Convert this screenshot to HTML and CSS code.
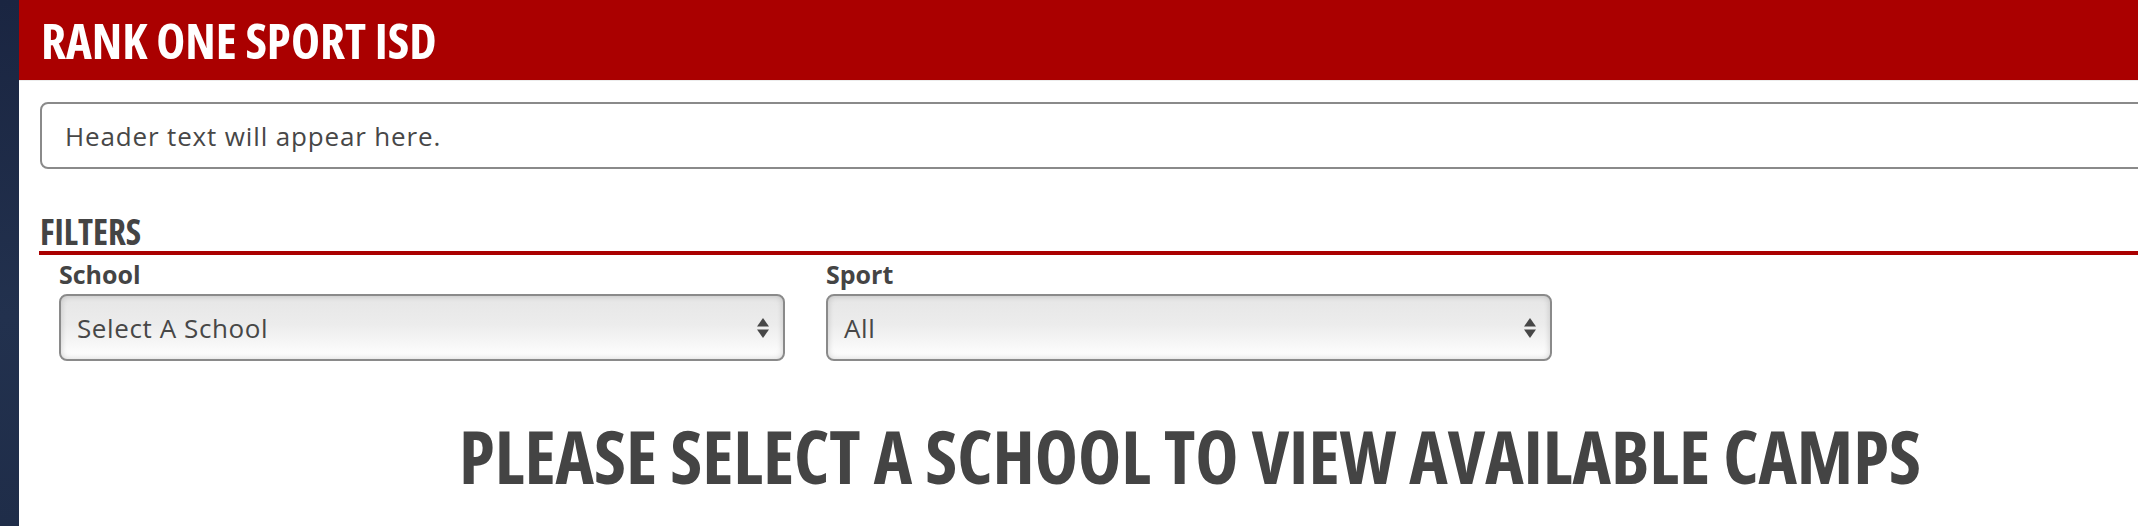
FILE: index.html
```html
<!DOCTYPE html>
<html lang="en">
<head>
<meta charset="utf-8">
<title>Rank One Sport ISD - Camps</title>
<link rel="stylesheet" href="styles.css">
</head>
<body>
<div class="page">
  <aside class="rail"></aside>
  <main class="content">
    <header class="topbar">
      <h1 class="brand">RANK ONE SPORT ISD</h1>
    </header>
    <div class="notice">Header text will appear here.</div>
    <section class="filters">
      <h2 class="filters-title">FILTERS</h2>
      <div class="filter-row">
        <div class="field">
          <span class="field-label">School</span>
          <div class="select">
            <span class="select-value">Select A School</span>
            <svg class="select-arrows" width="12" height="20" viewBox="0 0 12 20"><path d="M6 0 L12 8.5 L0 8.5 Z" fill="#474747"/><path d="M0 11.5 L12 11.5 L6 20 Z" fill="#474747"/></svg>
          </div>
        </div>
        <div class="field">
          <span class="field-label">Sport</span>
          <div class="select">
            <span class="select-value">All</span>
            <svg class="select-arrows" width="12" height="20" viewBox="0 0 12 20"><path d="M6 0 L12 8.5 L0 8.5 Z" fill="#474747"/><path d="M0 11.5 L12 11.5 L6 20 Z" fill="#474747"/></svg>
          </div>
        </div>
      </div>
    </section>
    <h3 class="prompt">PLEASE SELECT A SCHOOL TO VIEW AVAILABLE CAMPS</h3>
  </main>
</div>
</body>
</html>
```

FILE: styles.css
```css
html, body {
  margin: 0;
  padding: 0;
  background: #ffffff;
  overflow: hidden;
}

.page {
  display: flex;
  width: 2361px;
  min-height: 526px;
}

.rail {
  width: 19px;
  flex: 0 0 19px;
  background: linear-gradient(180deg, #1a2541 0%, #22314e 60%, #1f2d49 100%);
}

.content {
  flex: 1;
  display: flex;
  flex-direction: column;
  background: #ffffff;
}

.topbar {
  height: 80px;
  background: #aa0000;
  border-bottom: 1px solid #ececec;
  display: flex;
  align-items: center;
  padding-left: 22px;
}

.brand {
  margin: 0;
  color: #ffffff;
  font-family: "Open Sans", "Liberation Sans Narrow", sans-serif;
  font-stretch: 75%;
  font-weight: 700;
  font-size: 49px;
  line-height: 1;
}

.notice {
  margin: 21px 21px 0 21px;
  height: 63px;
  border: 2px solid #8a8a8a;
  border-radius: 8px;
  padding: 0 23px;
  display: flex;
  align-items: center;
  font-family: "Open Sans", "Noto Sans", sans-serif;
  font-size: 26px;
  letter-spacing: 0.85px;
  color: #474747;
}

.filters {
  margin: 44px 0 0 20px;
}

.filters-title {
  margin: 0;
  padding-left: 1px;
  font-family: "Open Sans", "Liberation Sans Narrow", sans-serif;
  font-stretch: 75%;
  font-weight: 700;
  font-size: 35px;
  line-height: 38px;
  color: #444444;
  border-bottom: 4px solid #aa0000;
}

.filter-row {
  display: flex;
  gap: 41px;
  padding-left: 20px;
  margin-top: 4px;
}

.field {
  display: flex;
  flex-direction: column;
  width: 726px;
}

.field-label {
  font-family: "Open Sans", "Noto Sans", sans-serif;
  font-weight: 700;
  font-size: 25px;
  line-height: 30px;
  color: #444444;
  margin-bottom: 5px;
}

.select {
  height: 63px;
  border: 2px solid #8a8a8a;
  border-radius: 8px;
  background: linear-gradient(180deg, #e6e6e6 0%, #ececec 45%, #ffffff 100%);
  box-shadow: inset 0 0 6px rgba(0, 0, 0, 0.18);
  display: flex;
  align-items: center;
  justify-content: space-between;
  padding: 0 14px 0 16px;
}

.select-value {
  font-family: "Open Sans", "Noto Sans", sans-serif;
  font-size: 26px;
  letter-spacing: 0.6px;
  color: #474747;
}

.select-arrows {
  display: block;
}

.prompt {
  margin: 58px 0 0 0;
  text-align: center;
  font-family: "Open Sans", "Liberation Sans Narrow", sans-serif;
  font-stretch: 75%;
  font-weight: 700;
  font-size: 73px;
  line-height: 1;
  color: #444444;
}
```
